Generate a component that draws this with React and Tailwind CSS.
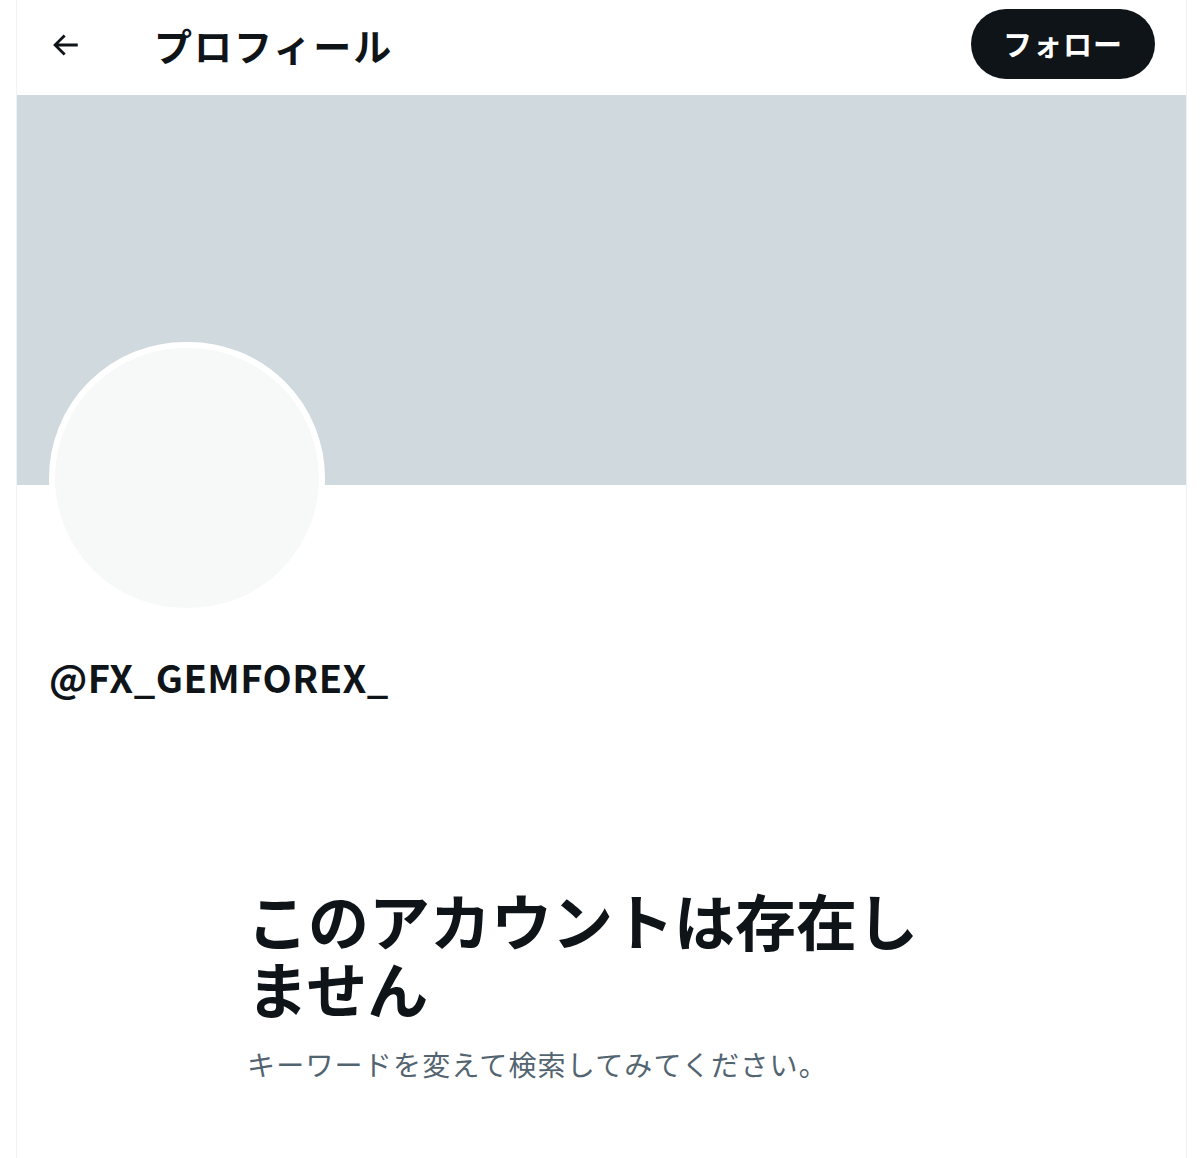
import React from 'react';

const font = { fontFamily: '"Noto Sans CJK JP", "Noto Sans", sans-serif' };

function BackArrow() {
  return (
    <svg viewBox="0 0 24 24" className="w-[34px] h-[34px] text-[#0f1419]" fill="currentColor">
      <path d="M7.414 13l5.043 5.04-1.414 1.42L3.586 12l7.457-7.46 1.414 1.42L7.414 11H21v2H7.414z" />
    </svg>
  );
}

export default function App() {
  return (
    <div className="w-[1200px] h-[1158px] bg-white overflow-hidden" style={font}>
      <div className="ml-[16px] w-[1171px] h-full border-l border-r border-[#eff3f4] flex flex-col">
        {/* Header */}
        <div className="h-[95px] flex items-center pl-[31px] pr-[31px]">
          <div className="mb-[6px]">
            <BackArrow />
          </div>
          <h1 className="ml-[72px] mb-[6px] text-[38px] font-bold text-[#0f1419] tracking-[2px] leading-none">プロフィール</h1>
          <button className="ml-auto mb-[8px] h-[70px] w-[184px] rounded-full bg-[#0f1419] text-white text-[29px] font-bold tracking-[1px]">
            フォロー
          </button>
        </div>

        {/* Banner */}
        <div className="h-[390px] bg-[#cfd9de]" />

        {/* Avatar */}
        <div className="pl-[32px] -mt-[143px]">
          <div className="w-[276px] h-[272px] rounded-full bg-[#f7f9f9] border-[6px] border-white" />
        </div>

        {/* Handle */}
        <div className="pl-[32px] mt-[44px] text-[38px] font-bold text-[#0f1419] leading-none tracking-[0.5px]">@FX_GEMFOREX_</div>

        {/* Empty state */}
        <div className="pl-[230px] mt-[190px]">
          <h2 className="w-[700px] text-[61px] font-bold text-[#0f1419] leading-[68px]">
            このアカウントは存在しません
          </h2>
          <p className="mt-[22px] text-[28px] text-[#536471] leading-[40px] tracking-[1.2px]">
            キーワードを変えて検索してみてください。
          </p>
        </div>
      </div>
    </div>
  );
}
